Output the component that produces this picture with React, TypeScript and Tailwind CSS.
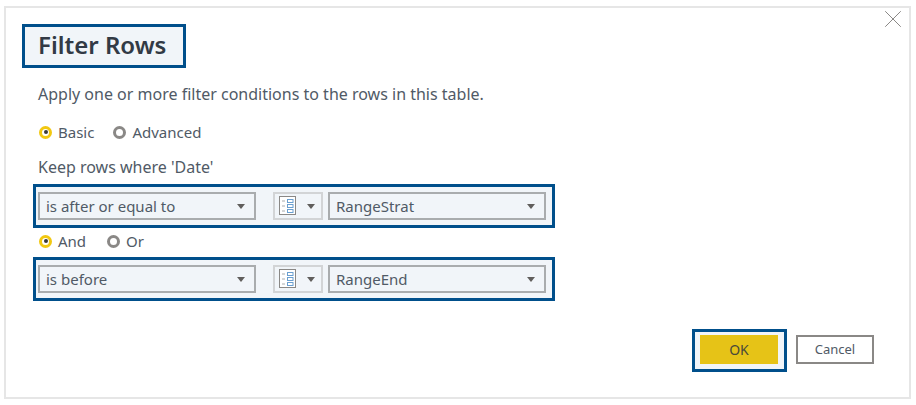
import { X } from "lucide-react";

function Radio({ label, checked, className }: { label: string; checked?: boolean; className?: string }) {
  return (
    <div className={`flex items-center ${className ?? ""}`}>
      {checked ? (
        <span className="flex h-[13px] w-[13px] items-center justify-center rounded-full border-[3px] border-[#f2c811] bg-white">
          <span className="h-[4px] w-[4px] rounded-full bg-[#3b3a39]" />
        </span>
      ) : (
        <span className="h-[13px] w-[13px] rounded-full border-[3px] border-[#8a8886] bg-white" />
      )}
      <span className="ml-[6px] text-[15px] leading-5 text-[#505a66]">{label}</span>
    </div>
  );
}

function Caret() {
  return <span className="h-0 w-0 border-x-[4px] border-t-[5px] border-x-transparent border-t-[#605e5c]" />;
}

function Select({ value }: { value: string }) {
  return (
    <div className="flex h-[28px] w-[218px] items-center justify-between border-2 border-[#a9acae] bg-[#f1f5f9] pl-[6px] pr-[9px]">
      <span className="pt-[1px] text-[15px] text-[#505a66]">{value}</span>
      <Caret />
    </div>
  );
}

function ParamButton() {
  return (
    <div className="ml-[17px] flex h-[28px] w-[50px] items-center border-2 border-[#d2d4d6] bg-[#f1f5f9] pl-[4px]">
      <svg width="18" height="20" viewBox="0 0 18 20" fill="none">
        <rect x="0.5" y="0.5" width="16" height="18" fill="#fff" stroke="#8a8886" />
        <path d="M3 5h3M3 10h3M3 15h3" stroke="#a9acae" strokeWidth="1" />
        <rect x="8.5" y="3.5" width="5.5" height="3" stroke="#6a9fd0" />
        <rect x="8.5" y="8.5" width="5.5" height="3" stroke="#6a9fd0" />
        <rect x="8.5" y="13.5" width="5.5" height="3" stroke="#6a9fd0" />
      </svg>
      <span className="ml-[10px] flex">
        <Caret />
      </span>
    </div>
  );
}

function FilterRow({ op, value }: { op: string; value: string }) {
  return (
    <div className="ml-[27px] flex h-[44px] w-[522px] items-center border-[3px] border-[#004f8b] bg-[#f1f5f9] pl-[2px]">
      <Select value={op} />
      <ParamButton />
      <span className="ml-[5px]">
        <Select value={value} />
      </span>
    </div>
  );
}

export default function App() {
  return (
    <div className="h-[405px] w-[916px] bg-white pl-[4px] pt-[6px] font-['Noto_Sans',sans-serif]">
      <div className="relative h-[393px] w-[907px] border-2 border-[#e6e6e6] bg-white">
        <X className="absolute right-[1px] top-[-4px] h-[30px] w-[30px] text-[#8a8886]" strokeWidth={0.8} />

        <div className="ml-[16px] mt-[16px] flex h-[44px] w-[164px] items-center border-[3px] border-[#004f8b] bg-[#f1f5f9] pl-[13px]">
          <h1 className="pb-[2px] text-[24px] font-semibold text-[#323a45]">Filter Rows</h1>
        </div>

        <p className="ml-[32px] mt-[14px] text-[16px] leading-6 text-[#505a66]">
          Apply one or more filter conditions to the rows in this table.
        </p>

        <div className="ml-[33px] mt-[16px] flex h-5">
          <Radio label="Basic" checked />
          <Radio label="Advanced" className="ml-[19px]" />
        </div>

        <p className="ml-[32px] mt-[15px] text-[16px] leading-5 text-[#505a66]">Keep rows where 'Date'</p>

        <div className="mt-[7px]">
          <FilterRow op="is after or equal to" value="RangeStrat" />
        </div>

        <div className="ml-[33px] mt-[3px] flex h-[20px]">
          <Radio label="And" checked />
          <Radio label="Or" className="ml-[21px]" />
        </div>

        <div className="mt-[6px]">
          <FilterRow op="is before" value="RangeEnd" />
        </div>

        <div className="ml-[686px] mt-[28px] flex items-center">
          <div className="flex h-[43px] w-[95px] items-center border-[3px] border-[#004f8b] bg-[#f1f5f9] pb-[2px] pl-[5px]">
            <button className="h-[29px] w-[78px] bg-[#e6c317] text-[14px] text-[#4a4a3a]">OK</button>
          </div>
          <button className="mb-[2px] ml-[9px] h-[29px] w-[78px] border-2 border-[#8a8886] bg-white text-[13px] text-[#505a66]">
            Cancel
          </button>
        </div>
      </div>
    </div>
  );
}
